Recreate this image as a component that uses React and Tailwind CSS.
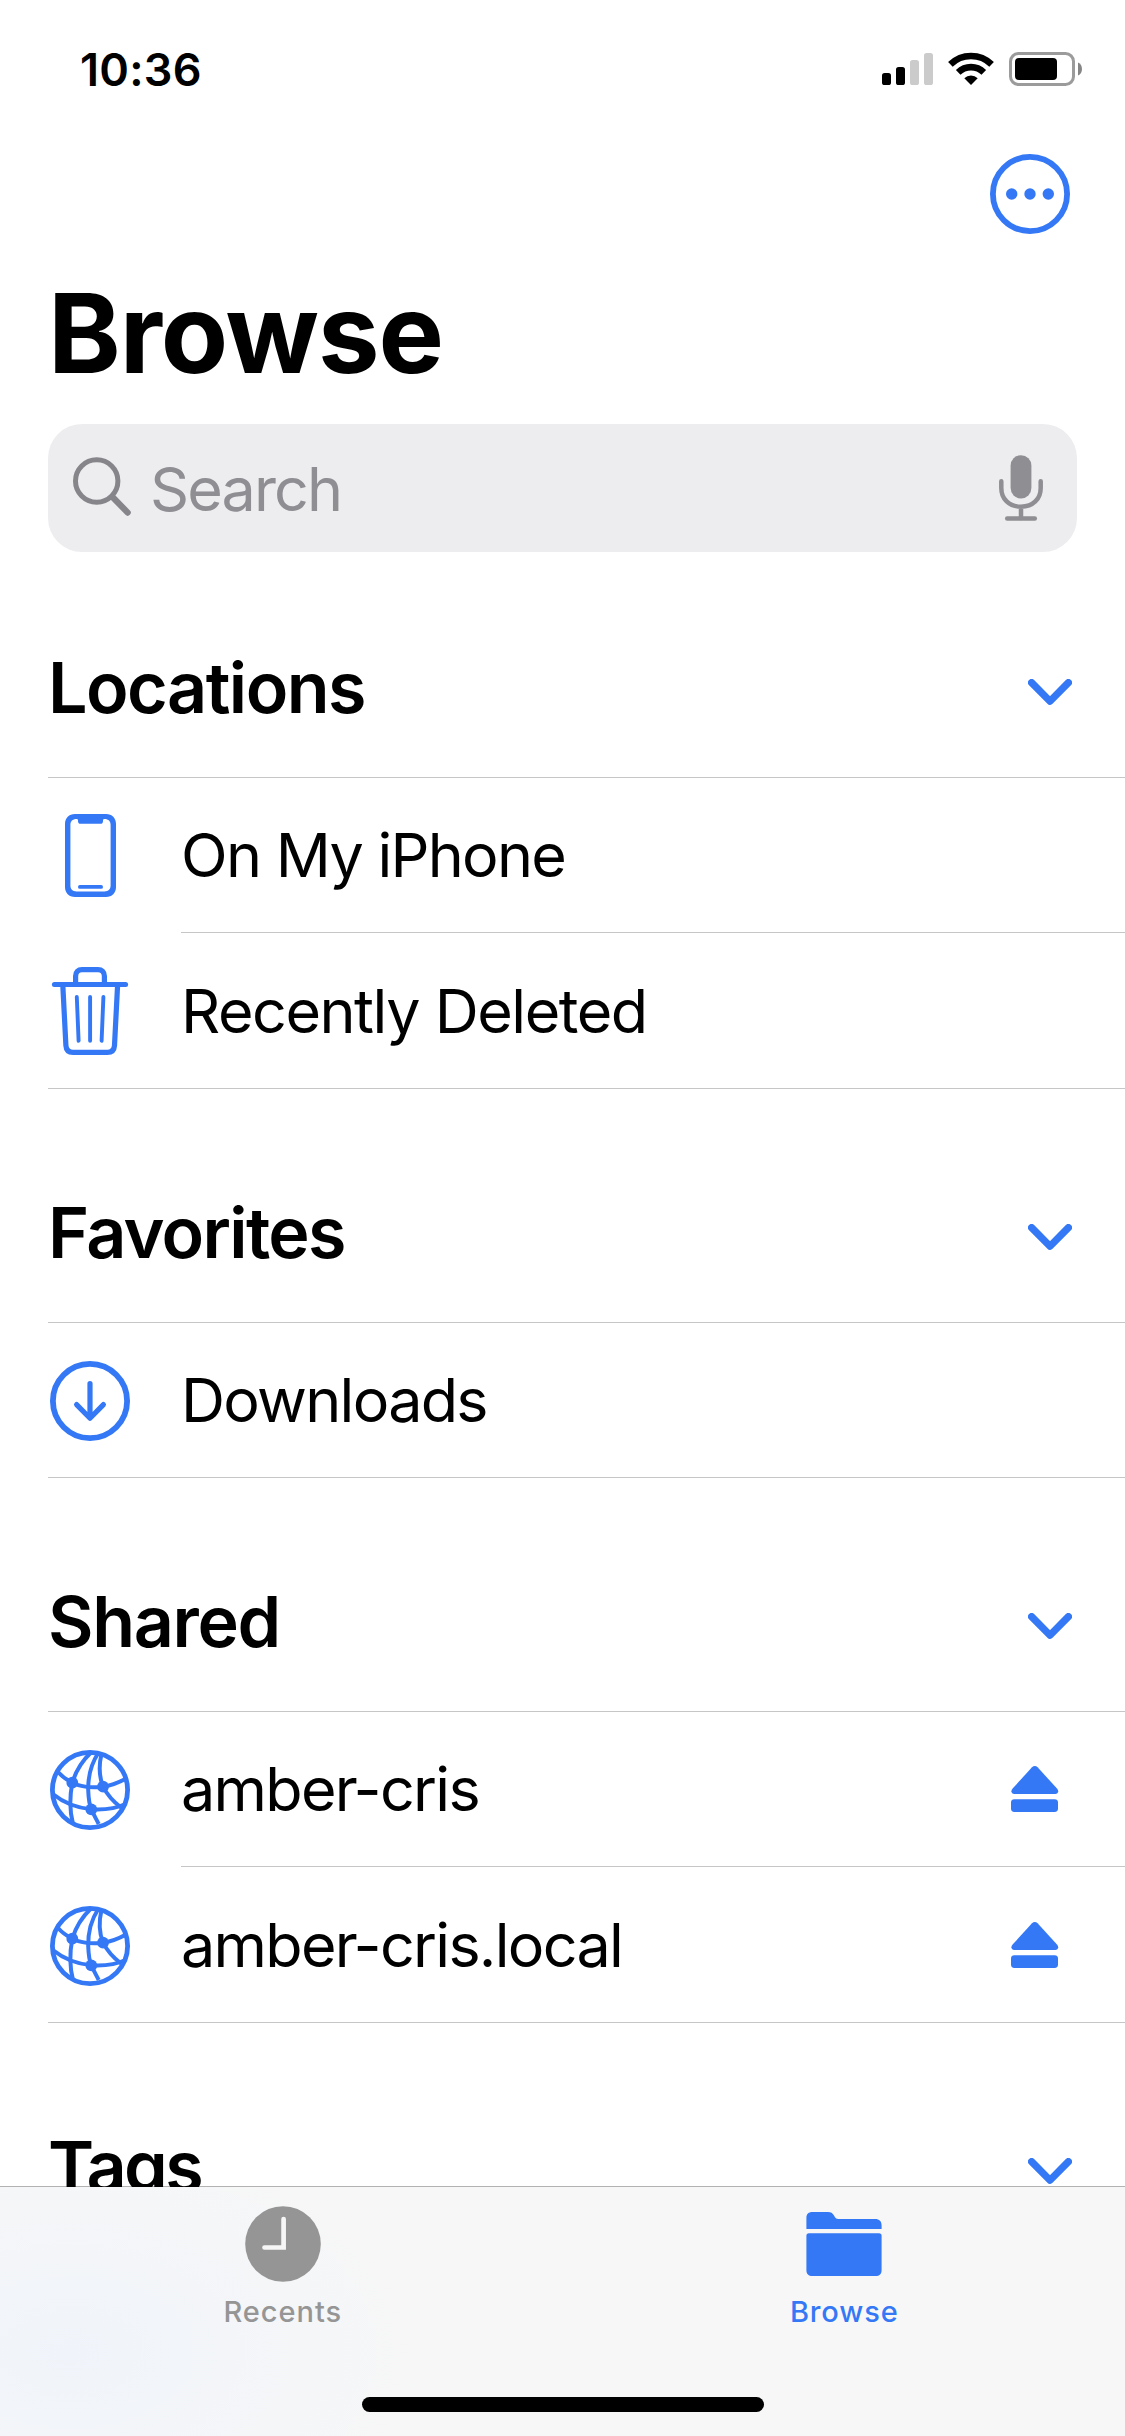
import React from 'react';

const StatusIcons = () => (
  <svg className="w-[200px] h-[34px]" viewBox="882 52 200 34" fill="none">
    <rect x="882" y="73" width="9" height="12" rx="2.6" fill="#000" />
    <rect x="896" y="67" width="9" height="18" rx="2.6" fill="#000" />
    <rect x="910" y="60" width="9" height="25" rx="2.6" fill="#cbcbcb" />
    <rect x="924" y="53" width="9" height="32" rx="2.6" fill="#cbcbcb" />
    <g stroke="#000" strokeWidth="6.6">
      <path d="M950.4 64.4A29.5 29.5 0 0 1 991.6 64.4" />
      <path d="M958.2 72.3A18.3 18.3 0 0 1 983.8 72.3" />
    </g>
    <path d="M971 85L964.3 78.2A9.6 9.6 0 0 1 977.7 78.2Z" fill="#000" />
    <rect x="1010.5" y="53.5" width="63" height="31" rx="8" stroke="#9b9b9b" strokeWidth="3" />
    <rect x="1015" y="58" width="42" height="22" rx="4" fill="#000" />
    <path d="M1078 62.5C1083.3 64.5 1083.3 73.5 1078 75.5Z" fill="#858585" />
  </svg>
);

const MoreIcon = () => (
  <svg className="w-20 h-20" viewBox="0 0 80 80" fill="none">
    <circle cx="40" cy="40" r="37.1" stroke="#3478f6" strokeWidth="5.8" />
    <g fill="#3478f6">
      <circle cx="21.7" cy="40" r="5.7" />
      <circle cx="40" cy="40" r="5.7" />
      <circle cx="58.3" cy="40" r="5.7" />
    </g>
  </svg>
);

const SearchIcon = () => (
  <svg className="w-[58px] h-[59px] mb-[3px]" viewBox="73 457 58 59" fill="none" stroke="#85858a">
    <circle cx="96.7" cy="481" r="21.2" strokeWidth="5" />
    <path d="M112.5 497L127.7 512.6" strokeWidth="6.2" strokeLinecap="round" />
  </svg>
);

const MicIcon = () => (
  <svg className="w-11 h-[66px]" viewBox="999 455 44 66" fill="none" stroke="#8e8e93" strokeLinecap="round">
    <rect x="1010.6" y="455.2" width="20.8" height="43.3" rx="10.4" fill="#8e8e93" stroke="none" />
    <path d="M1001.3 481.3V488C1001.3 499 1009 506.7 1021 506.7S1040.7 499 1040.7 488V481.3M1021 507V518" strokeWidth="4.5" />
    <path d="M1007.2 518.5H1034.8" strokeWidth="4.5" />
  </svg>
);

const ChevronIcon = () => (
  <svg className="w-11 h-[26px]" viewBox="0 0 44 26" fill="none">
    <path d="M3.6 3.6L22 22.2L40.4 3.6" stroke="#3478f6" strokeWidth="7.2" strokeLinecap="round" strokeLinejoin="round" />
  </svg>
);

const PhoneIcon = () => (
  <svg className="w-20 h-[90px]" viewBox="0 0 80 90" fill="#3478f6">
    <path
      fillRule="evenodd"
      d="M25 4H56C62 4 66 8 66 14V77C66 83 62 87 56 87H25C19 87 15 83 15 77V14C15 8 19 4 25 4ZM26.5 9C22.5 9 20.4 11.2 20.4 15V75.5C20.4 79.3 22.5 81.4 26.5 81.4H54.5C58.5 81.4 60.6 79.3 60.6 75.5V15C60.6 11.2 58.5 9 54.5 9C53.5 9 53 9.5 53 10.5V11.2C53 12.8 52 13.8 50.4 13.8H30.6C29 13.8 28 12.8 28 11.2V10.5C28 9.5 27.5 9 26.5 9Z"
    />
    <rect x="28" y="75" width="25" height="3.8" rx="1.9" />
  </svg>
);

const TrashIcon = () => (
  <svg className="w-20 h-[90px]" viewBox="0 0 80 90" fill="none" stroke="#3478f6" strokeLinecap="round">
    <path d="M4.4 18.6H75.6" strokeWidth="5" />
    <path d="M25.6 18V10C25.6 6 28 3.6 32 3.6H48C52 3.6 54.4 6 54.4 10V18" strokeWidth="5.2" />
    <path d="M12.8 19L15.9 79.5C16.2 84 18.8 86.4 23 86.4H57.4C61.6 86.4 64.2 84 64.5 79.5L67.6 19" strokeWidth="5.2" />
    <path d="M26.8 31L28.6 74.8M40.1 31V74.8M53.4 31L51.6 74.8" strokeWidth="3.9" />
  </svg>
);

const DownloadIcon = () => (
  <svg className="w-20 h-[90px]" viewBox="0 0 80 90" fill="none" stroke="#3478f6" strokeLinecap="round" strokeLinejoin="round">
    <circle cx="40" cy="46" r="37.1" strokeWidth="5.8" />
    <path d="M40 28.6V63M26.6 49.6L40 63.2L53.4 49.6" strokeWidth="5.2" />
  </svg>
);

const GlobeIcon = () => (
  <svg className="w-20 h-[90px]" viewBox="0 0 80 90" fill="none" stroke="#3478f6" strokeWidth="4">
    <circle cx="40" cy="46" r="37.6" strokeWidth="4.8" />
    {/* meridians */}
    <path d="M41 8.5C32 17 25.5 28 22.3 38.7C19.8 52 19.5 67 23 80" />
    <path d="M48.3 9C41 20 38 33 38.2 46C38.5 54 39 60 41.3 65.3C43.5 70.5 46 74.5 48.7 80" />
    <path d="M51.5 10C48.8 21 48.6 31 53 42.7C57 50.5 63 57.5 71 63.5" />
    {/* parallels */}
    <path d="M8 28C12 32.5 17 36 22.3 38.7C32 43.3 43 44 53 42.7C61 41.5 69 38.5 76 34.5" />
    <path d="M3.5 50.5C14 59 28 64 41.3 65.3C53 66 65 65 75.5 60" />
    <g fill="#3478f6" stroke="none">
      <circle cx="22.3" cy="38.7" r="5.9" />
      <circle cx="53" cy="42.7" r="5.9" />
      <circle cx="41.3" cy="65.3" r="5.9" />
    </g>
  </svg>
);

const EjectIcon = () => (
  <svg className="w-12 h-[46px]" viewBox="0 0 48 46" fill="#3478f6">
    <path d="M21 1.2C22.7 -.4 24.9 -.4 26.6 1.2L46.2 22.8C48.1 25 47.1 28 44.2 28H3.4C.5 28 -.5 25 1.4 22.8Z" />
    <rect x="0" y="33.2" width="47" height="12.8" rx="3.4" />
  </svg>
);

const RecentsIcon = () => (
  <svg className="w-[76px] h-[76px]" viewBox="0 0 76 76" fill="none">
    <circle cx="38" cy="38" r="37.8" fill="#959595" />
    <path d="M38.6 13V41.5H19.5" stroke="#f6f6f6" strokeWidth="4.7" strokeLinecap="round" />
  </svg>
);

const FolderIcon = () => (
  <svg className="w-[76px] h-16" viewBox="0 0 76 64" fill="#3478f6">
    <path d="M.4 17V6C.4 2 2.5 0 6.5 0H22C25 0 26.5 1 28 3.6C29.500 6.2 30 7 32.5 7H69C73.5 7 75.6 9.3 75.6 13.5V17Z" />
    <path d="M3 21.2H73C74.8 21.2 75.6 22 75.6 23.8V58C75.6 62 73.5 64 69.5 64H6.5C2.5 64 .4 62 .4 58V23.8C.4 22 1.2 21.2 3 21.2Z" />
  </svg>
);

const sections = [
  {
    title: 'Locations',
    spacing: 'tracking-[-0.022em]',
    items: [
      { label: 'On My iPhone', icon: PhoneIcon, spacing: 'tracking-[-0.028em]' },
      { label: 'Recently Deleted', icon: TrashIcon, spacing: 'tracking-[-0.024em]' },
    ],
  },
  {
    title: 'Favorites',
    spacing: 'tracking-[-0.024em]',
    items: [{ label: 'Downloads', icon: DownloadIcon, spacing: 'tracking-[-0.028em]' }],
  },
  {
    title: 'Shared',
    spacing: 'tracking-[-0.019em]',
    items: [
      { label: 'amber-cris', icon: GlobeIcon, eject: true, spacing: 'tracking-[-0.028em]' },
      { label: 'amber-cris.local', icon: GlobeIcon, eject: true, spacing: 'tracking-[-0.028em]' },
    ],
  },
  { title: 'Tags', spacing: 'tracking-[-0.037em]', items: [] },
];

const Row = ({ item, first }) => {
  const Icon = item.icon;
  return (
    <>
      {!first && <div className="ml-[133px] mb-px h-px bg-[#c6c6c8]" />}
      <div className="flex h-[154px] items-center pl-0.5">
        <Icon />
        <span className={`ml-[51px] flex-1 text-[61px] leading-none ${item.spacing}`}>{item.label}</span>
        {item.eject && (
          <button className="mr-[66px]" aria-label="Eject">
            <EjectIcon />
          </button>
        )}
      </div>
    </>
  );
};

const Section = ({ section }) => (
  <section className="pl-12">
    <div className="flex h-[233px] items-center justify-between pt-[54px] pr-[53px]">
      <h2 className={`text-[70px] font-semibold leading-none ${section.spacing}`}>{section.title}</h2>
      <button className="pt-2" aria-label={`Collapse ${section.title}`}>
        <ChevronIcon />
      </button>
    </div>
    <div className="border-y border-[#c6c6c8]">
      {section.items.map((item, index) => (
        <Row key={item.label} item={item} first={index === 0} />
      ))}
    </div>
  </section>
);

export default function App() {
  return (
    <div className="flex h-[2436px] w-[1125px] flex-col overflow-hidden bg-white font-['Inter',sans-serif] text-black">
      <main className="h-[2187px] shrink-0 overflow-hidden">
        {/* Status bar */}
        <div className="flex h-[138px] items-center justify-between pl-20 pr-[43px]">
          <span className="text-[45px] font-semibold leading-none tracking-[0.006em]">10:36</span>
          <StatusIcons />
        </div>

        {/* Header */}
        <div className="flex justify-end pt-4 pr-[55px]">
          <button aria-label="More">
            <MoreIcon />
          </button>
        </div>
        <h1 className="mt-11 pl-12 text-[110px] font-bold leading-[110px] tracking-[-0.01em]">Browse</h1>
        <div className="mx-12 mt-9 flex h-32 items-center rounded-[34px] bg-[#ededef] pl-[25px] pr-[34px]">
          <SearchIcon />
          <span className="ml-[19px] mt-0.5 flex-1 text-[61px] leading-none tracking-[-0.031em] text-[#8e8e93]">Search</span>
          <MicIcon />
        </div>

        <div className="-mt-2">
          {sections.map((section) => (
            <Section key={section.title} section={section} />
          ))}
        </div>
      </main>

      {/* Tab bar */}
      <nav className="-mt-px flex h-[250px] shrink-0 flex-col items-center border-t border-black/30 bg-[#f7f7f7] bg-[radial-gradient(ellipse_360px_220px_at_70px_165px,#f0f4fa,#f7f7f7)] bg-clip-padding">
        <div className="flex h-[210px] w-full pl-0.5 text-[29px] font-medium leading-none">
          <button className="flex flex-1 flex-col items-center pt-[19px] text-[#959595]">
            <RecentsIcon />
            <span className="mt-[15px] tracking-[0.033em]">Recents</span>
          </button>
          <button className="flex flex-1 flex-col items-center pt-[25px] text-[#3478f6]">
            <FolderIcon />
            <span className="mt-[21px] tracking-[0.03em]">Browse</span>
          </button>
        </div>
        <div className="h-[15px] w-[402px] rounded-full bg-black" />
      </nav>
    </div>
  );
}
